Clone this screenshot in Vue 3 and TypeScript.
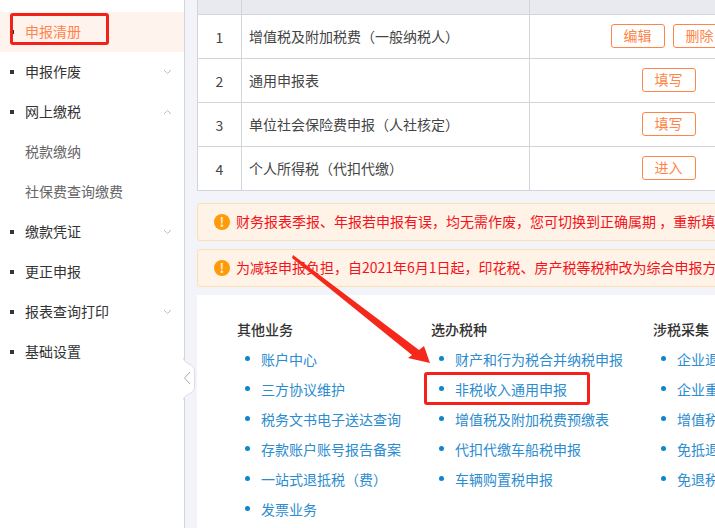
<template>
  <div class="page">
    <aside class="sidebar">
      <ul class="menu">
        <li v-for="item in menu" :key="item.label" class="menu-item" :class="{ active: item.active, sub: item.sub }">
          <span class="menu-label">{{ item.label }}</span>
          <svg v-if="item.arrow" class="chevron" :class="{ up: item.arrow === 'up' }" width="9" height="6" viewBox="0 0 9 6">
            <path d="M1 1 L4.5 4.5 L8 1" fill="none" stroke="#b8bcc6" stroke-width="1" />
          </svg>
        </li>
      </ul>
      <svg class="collapse" width="14" height="42" viewBox="0 0 14 42">
        <path d="M0.5 0 C1 7 11.5 5 11.5 13 V29 C11.5 37 1 35 0.5 42" fill="#fff" stroke="#dddee5" />
        <path d="M7 14 L1.5 20 L7 26" fill="none" stroke="#a9adb8" stroke-width="1" />
      </svg>
    </aside>

    <main class="main">
      <table class="tax-table">
        <colgroup>
          <col style="width: 44px" />
          <col style="width: 288px" />
          <col style="width: 278px" />
        </colgroup>
        <thead>
          <tr><th></th><th></th><th></th></tr>
        </thead>
        <tbody>
          <tr v-for="(row, i) in rows" :key="row.name">
            <td class="num">{{ i + 1 }}</td>
            <td class="name">{{ row.name }}</td>
            <td class="actions">
              <button v-for="b in row.buttons" :key="b" class="btn">{{ b }}</button>
            </td>
          </tr>
        </tbody>
      </table>

      <div v-for="n in notices" :key="n" class="notice">
        <span class="notice-icon">!</span>
        <span class="notice-text">{{ n }}</span>
      </div>

      <section class="panel">
        <div v-for="col in columns" :key="col.title" class="column" :style="{ width: col.width + 'px' }">
          <h3 class="col-title">{{ col.title }}</h3>
          <ul class="links">
            <li v-for="link in col.links" :key="link">{{ link }}</li>
          </ul>
        </div>
      </section>
    </main>

    <div class="mark mark-menu"></div>
    <div class="mark mark-link"></div>
    <svg class="arrow" width="715" height="528" viewBox="0 0 715 528">
      <polygon points="293,255 419,350 424,346 430,363 408,358 412,355 292,258" fill="#f5281c" />
    </svg>
  </div>
</template>

<script setup lang="ts">
interface MenuItem {
  label: string
  active?: boolean
  sub?: boolean
  arrow?: 'up' | 'down'
}

const menu: MenuItem[] = [
  { label: '申报清册', active: true },
  { label: '申报作废', arrow: 'down' },
  { label: '网上缴税', arrow: 'up' },
  { label: '税款缴纳', sub: true },
  { label: '社保费查询缴费', sub: true },
  { label: '缴款凭证', arrow: 'down' },
  { label: '更正申报' },
  { label: '报表查询打印', arrow: 'down' },
  { label: '基础设置' },
]

const rows = [
  { name: '增值税及附加税费（一般纳税人）', buttons: ['编辑', '删除'] },
  { name: '通用申报表', buttons: ['填写'] },
  { name: '单位社会保险费申报（人社核定）', buttons: ['填写'] },
  { name: '个人所得税（代扣代缴）', buttons: ['进入'] },
]

const notices = [
  '财务报表季报、年报若申报有误，均无需作废，您可切换到正确属期 ，重新填写申报',
  '为减轻申报负担，自2021年6月1日起，印花税、房产税等税种改为综合申报方式',
]

const columns = [
  {
    title: '其他业务',
    width: 194,
    links: ['账户中心', '三方协议维护', '税务文书电子送达查询', '存款账户账号报告备案', '一站式退抵税（费）', '发票业务'],
  },
  {
    title: '选办税种',
    width: 222,
    links: ['财产和行为税合并纳税申报', '非税收入通用申报', '增值税及附加税费预缴表', '代扣代缴车船税申报', '车辆购置税申报'],
  },
  {
    title: '涉税采集',
    width: 200,
    links: ['企业退税信息', '企业重组信息', '增值税信息', '免抵退税申报', '免退税申报'],
  },
]
</script>

<style>
html,
body {
  margin: 0;
  overflow: hidden;
}
</style>

<style scoped>
.page {
  position: relative;
  display: flex;
  width: 715px;
  height: 528px;
  overflow: hidden;
  background: #f3f4f9;
  font-family: "Noto Sans CJK SC", "Liberation Sans", sans-serif;
  font-size: 14px;
  color: #333;
}

.sidebar {
  position: relative;
  flex: none;
  box-sizing: border-box;
  width: 185px;
  padding-top: 12px;
  background: #fff;
  border-right: 1px solid #d3d4da;
}

.menu {
  list-style: none;
  margin: 0;
  padding: 0;
}

.menu-item {
  position: relative;
  display: flex;
  align-items: center;
  box-sizing: border-box;
  height: 40px;
  padding: 0 0 2px 25px;
  line-height: 20px;
}

.menu-item::before {
  content: "";
  position: absolute;
  left: 10px;
  top: 18px;
  width: 4px;
  height: 4px;
  background: #333;
}

.menu-item.active {
  background: #fff3ed;
  color: #ff8448;
}

.menu-item.sub {
  color: #666;
}

.menu-item.sub::before {
  display: none;
}

.chevron {
  position: absolute;
  left: 163px;
  top: 17px;
}

.chevron.up {
  transform: scaleY(-1);
}

.collapse {
  position: absolute;
  left: 183px;
  top: 358px;
}

.main {
  flex: none;
  width: 640px;
  padding-left: 12px;
}

.tax-table {
  width: 610px;
  table-layout: fixed;
  border-collapse: collapse;
  background: #fff;
  border: 1px solid #d3d4da;
  border-top: 0;
}

.tax-table th {
  height: 14px;
  padding: 0;
  background: #e9eaef;
  border: 1px solid #d3d4da;
  border-top: 0;
}

.tax-table td {
  box-sizing: border-box;
  height: 44px;
  padding: 0;
  border: 1px solid #d3d4da;
  font-size: 14px;
  color: #444;
}

.num {
  text-align: center;
}

.tax-table .name {
  padding-left: 7px;
  padding-bottom: 1px;
}

.tax-table .actions {
  padding-bottom: 2px;
  text-align: center;
  white-space: nowrap;
}

.btn {
  box-sizing: border-box;
  width: 54px;
  height: 24px;
  margin: 0 4px;
  padding: 0 0 2px;
  background: #fff;
  border: 1px solid #ff8448;
  border-radius: 3px;
  color: #ff8448;
  font-family: inherit;
  font-size: 14px;
  line-height: 20px;
  vertical-align: middle;
}

.notice {
  display: flex;
  align-items: center;
  box-sizing: border-box;
  width: 612px;
  height: 38px;
  margin-top: 8px;
  padding-left: 16px;
  background: #fef3e6;
  border: 1px solid #fbe0b4;
  border-radius: 3px;
  white-space: nowrap;
}

.tax-table + .notice {
  margin-top: 12px;
}

.notice-icon {
  flex: none;
  width: 16px;
  height: 16px;
  margin-right: 6px;
  border-radius: 50%;
  background: #ff9a0a;
  color: #ffe9c8;
  font-size: 13px;
  font-weight: 700;
  line-height: 16px;
  text-align: center;
}

.notice-text {
  color: #f5121a;
  font-size: 14px;
  padding-bottom: 2px;
}

.panel {
  display: flex;
  box-sizing: border-box;
  width: 612px;
  height: 300px;
  margin-top: 8px;
  padding: 24px 0 0 40px;
  background: #fff;
}

.column {
  flex: none;
}

.col-title {
  margin: 0 0 6px;
  font-size: 14px;
  font-weight: 500;
  line-height: 20px;
  color: #333;
}

.links {
  list-style: none;
  margin: 0;
  padding: 0 0 0 24px;
  white-space: nowrap;
}

.links li {
  position: relative;
  height: 30px;
  line-height: 28px;
  font-size: 14px;
  color: #2b8ccf;
}

.links li::before {
  content: "";
  position: absolute;
  left: -16px;
  top: 11px;
  width: 5px;
  height: 5px;
  border-radius: 50%;
  background: #0f85cf;
}

.mark {
  position: absolute;
  box-sizing: border-box;
  border: 3px solid #f5201a;
  border-radius: 3px;
}

.mark-menu {
  left: 10px;
  top: 13px;
  width: 99px;
  height: 32px;
}

.mark-link {
  left: 424px;
  top: 372px;
  width: 166px;
  height: 33px;
}

.arrow {
  position: absolute;
  left: 0;
  top: 0;
  pointer-events: none;
}
</style>
